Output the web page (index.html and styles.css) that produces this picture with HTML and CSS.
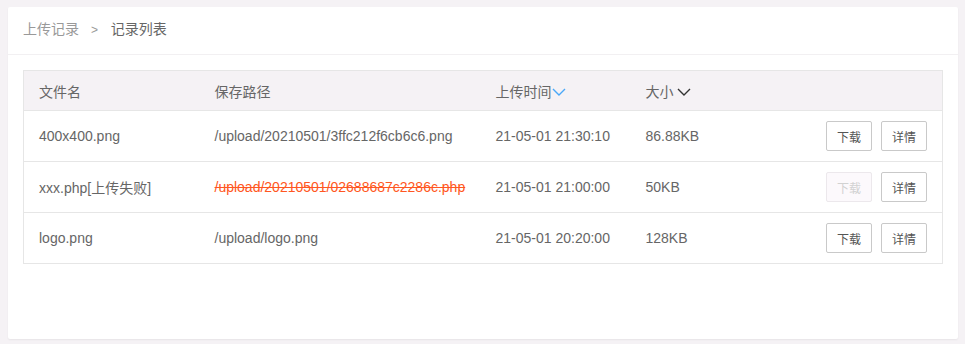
FILE: index.html
```html
<!DOCTYPE html>
<html lang="zh-CN">
  <head>
    <meta charset="UTF-8" />
    <meta name="viewport" content="width=device-width, initial-scale=1.0" />
    <title>记录列表</title>
    <link rel="stylesheet" href="styles.css">
  </head>
  <body>
    <div class="card">
      <div class="card-header">
        <span class="crumb">上传记录</span>
        <span class="crumb-sep">&gt;</span>
        <span class="crumb-current">记录列表</span>
      </div>

      <div class="card-body">
        <table class="record-table">
          <colgroup>
            <col style="width: 176px" />
            <col style="width: 281px" />
            <col style="width: 150px" />
            <col style="width: 150px" />
            <col />
          </colgroup>
          <thead>
            <tr>
              <th>文件名</th>
              <th>保存路径</th>
              <th>
                上传时间<svg class="sort-icon active" width="14" height="8" viewBox="0 0 14 8"><polyline points="1,1 7,7 13,1" /></svg>
              </th>
              <th>
                大小 <svg class="sort-icon" width="14" height="8" viewBox="0 0 14 8"><polyline points="1,1 7,7 13,1" /></svg>
              </th>
              <th></th>
            </tr>
          </thead>
          <tbody>
            <tr>
              <td>400x400.png</td>
              <td>/upload/20210501/3ffc212f6cb6c6.png</td>
              <td>21-05-01 21:30:10</td>
              <td>86.88KB</td>
              <td class="actions">
                <button class="btn">下载</button><button class="btn">详情</button>
              </td>
            </tr>
            <tr>
              <td>xxx.php[上传失败]</td>
              <td><span class="failed">/upload/20210501/02688687c2286c.php</span></td>
              <td>21-05-01 21:00:00</td>
              <td>50KB</td>
              <td class="actions">
                <button class="btn" disabled>下载</button><button class="btn">详情</button>
              </td>
            </tr>
            <tr>
              <td>logo.png</td>
              <td>/upload/logo.png</td>
              <td>21-05-01 20:20:00</td>
              <td>128KB</td>
              <td class="actions">
                <button class="btn">下载</button><button class="btn">详情</button>
              </td>
            </tr>
          </tbody>
        </table>
      </div>
    </div>
  </body>
</html>
```

FILE: styles.css
```css
body {
  margin: 0;
  padding: 7px 7px 5px 8px;
  background-color: #f5f2f5;
  font-family: "Liberation Sans", Arial, "Noto Sans CJK SC", sans-serif;
  font-size: 14px;
  color: #666;
}
.card {
  height: 332px;
  background-color: #fff;
  border-radius: 2px;
  box-shadow: 0 1px 2px rgba(0, 0, 0, 0.06);
}
.card-header {
  height: 47px;
  line-height: 44px;
  padding: 0 15px;
  border-bottom: 1px solid #f2f0f2;
}
.crumb {
  color: #999;
}
.crumb-sep {
  color: #999;
  margin: 0 9px 0 8px;
  font-size: 12px;
}
.crumb-current {
  color: #666;
}
.card-body {
  padding: 15px;
}
.record-table {
  width: 100%;
  table-layout: fixed;
  border-collapse: collapse;
  border: 1px solid #e6e6e6;
}
th,
td {
  text-align: left;
  padding: 0 15px;
  white-space: nowrap;
}
th {
  height: 39px;
  font-weight: normal;
  background-color: #f5f2f5;
  border-bottom: 1px solid #e6e6e6;
}
td {
  height: 50px;
  border-bottom: 1px solid #e6e6e6;
}
.sort-icon {
  vertical-align: 1px;
  fill: none;
  stroke: #333;
  stroke-width: 1.4;
}
.sort-icon.active {
  stroke: #4aa8f8;
}
.failed {
  color: #ff5722;
  text-decoration: line-through;
}
.actions {
  text-align: right;
}
.btn {
  height: 30px;
  padding: 0 10px;
  margin-left: 9px;
  font-family: inherit;
  font-size: 12px;
  color: #555;
  background-color: #fff;
  border: 1px solid #c9c9c9;
  border-radius: 2px;
  cursor: pointer;
}
.btn:disabled {
  color: #d2d2d2;
  background-color: #fcf9fc;
  border-color: #ece8ec;
  cursor: not-allowed;
}
```
